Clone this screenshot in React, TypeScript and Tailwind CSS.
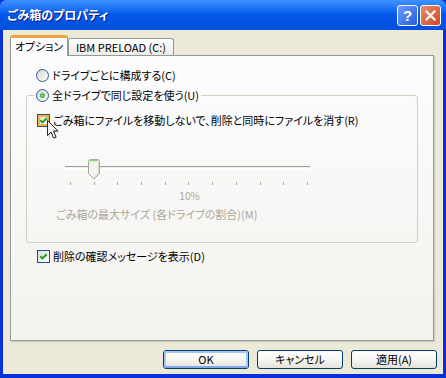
import React from 'react'

function CheckBox({ hover }: { hover?: boolean }) {
  return (
    <span className="relative flex h-[13px] w-[13px] shrink-0 items-center justify-center border border-[#1C5180] bg-linear-to-br from-[#DCDCD7] to-white">
      {hover && <span className="absolute inset-0 border-2 border-[#F8B33A]" />}
      <svg width="9" height="9" viewBox="0 0 9 9" className="relative">
        <path d="M1.3 4.2 L3.5 6.4 L7.7 2.2" stroke="#21A121" strokeWidth="2" fill="none" />
      </svg>
    </span>
  )
}

function Radio({ on }: { on?: boolean }) {
  return (
    <span className="flex h-[13px] w-[13px] shrink-0 items-center justify-center rounded-full border border-[#2A5A8C] bg-linear-to-br from-[#D6D5CE] to-white">
      {on && <span className="h-[5px] w-[5px] rounded-full bg-radial from-[#7BE07B] to-[#1E9A1E]" />}
    </span>
  )
}

function XpButton({ label, def }: { label: string; def?: boolean }) {
  return (
    <button className="relative h-[19px] w-[86px] rounded-[3px] border border-[#003C74] bg-linear-to-b from-white via-[#F6F5F1] to-[#E3E2DA] text-[11px] leading-[17px] text-black">
      {def && <span className="absolute inset-0 rounded-[2px] border-2 border-[#A8C5F2] border-b-[#7FA8EC]" />}
      <span className="relative">{label}</span>
    </button>
  )
}

export default function App() {
  return (
    <div className="flex h-[378px] w-[446px] flex-col bg-[#0831D9] font-['Noto_Sans_CJK_JP','Noto_Sans',sans-serif] [font-feature-settings:'palt']">
      {/* title bar */}
      <div className="flex h-[30px] shrink-0 items-center justify-between rounded-t-[6px] bg-linear-to-b from-[#3D93FF] via-[#0257EA] to-[#0450DB] pl-[7px] pr-[5px]">
        <span className="text-[12px] font-bold text-white [text-shadow:1px_1px_0_#0A1883]">ごみ箱のプロパティ</span>
        <div className="flex gap-[2px]">
          <div className="flex h-[21px] w-[21px] items-center justify-center rounded-[3px] border border-white bg-linear-to-br from-[#6D9DF8] to-[#245BE0] font-['Liberation_Sans',sans-serif] text-[15px] font-bold leading-none text-white">?</div>
          <div className="flex h-[21px] w-[21px] items-center justify-center rounded-[3px] border border-white bg-linear-to-br from-[#E98B6E] to-[#D2461E]">
            <svg width="11" height="11" viewBox="0 0 11 11">
              <path d="M1.5 1.5 L9.5 9.5 M9.5 1.5 L1.5 9.5" stroke="white" strokeWidth="2.2" strokeLinecap="square" />
            </svg>
          </div>
        </div>
      </div>

      {/* body */}
      <div className="mx-[3px] mb-[4px] flex flex-1 flex-col bg-[#ECE9D8] pl-[7px] pt-[5px]">
        {/* tabs */}
        <div className="relative z-10 flex items-end">
          <div className="mb-[-1px] flex h-[21px] w-[58px] items-start justify-center rounded-t-[3px] border-x border-t-[3px] border-x-[#919B9C] border-t-[#F1A33C] bg-[#FCFCFE] pt-[1px] text-[11px] leading-[14px] text-black">
            オプション
          </div>
          <div className="flex h-[17px] w-[106px] items-center justify-center rounded-t-[3px] border-x border-t border-[#919B9C] bg-linear-to-b from-white to-[#ECEBE6] text-[11px] leading-[14px] text-black">
            IBM PRELOAD (C:)
          </div>
        </div>

        {/* panel */}
        <div className="flex h-[286px] w-[424px] flex-col border border-[#919B9C] bg-linear-to-b from-[#FCFCFE] to-[#F3F2ED] shadow-[1px_1px_0_#D0CEBF,2px_2px_0_#E3E0D0] text-[11px] leading-[14px] text-black">
          <div className="mt-[12px] flex h-[14px] items-center gap-[3px] pl-[25px]">
            <Radio />
            <span>ドライブごとに構成する(C)</span>
          </div>

          <fieldset className="mx-[15px] mt-[6px] rounded-[3px] border border-[#D0D0BF] pb-[22px] pl-[7px]">
            <legend className="px-[2px]">
              <span className="flex h-[14px] items-center gap-[3px]">
                <Radio on />
                <span>全ドライブで同じ設定を使う(U)</span>
              </span>
            </legend>
            <div className="relative mt-[11px] flex h-[14px] items-center gap-[3px] pl-[3px]">
              <CheckBox hover />
              <span>ごみ箱にファイルを移動しないで、削除と同時にファイルを消す(R)</span>
              <svg width="13" height="21" viewBox="0 0 13 21" className="absolute left-[12px] top-[6px]">
                <path d="M1.5 1.5 L1.5 16.5 L5 13 L7.5 19 L10 18 L7.5 12 L12 12 Z" fill="#6B6B6B" opacity="0.35" transform="translate(1 1)" />
                <path d="M1.5 1.5 L1.5 16.5 L5 13 L7.5 19 L10 18 L7.5 12 L12 12 Z" fill="#F4F4F4" stroke="#2A2A2A" strokeWidth="1" strokeLinejoin="round" />
              </svg>
            </div>

            {/* slider */}
            <div className="ml-[31px] mt-[32px] w-[245px]">
              <div className="relative h-[20px]">
                <div className="absolute left-0 right-0 top-[7px] h-[3px] border-y border-t-[#9D9D97] border-b-white bg-[#F0EFE9]" />
                <svg width="12" height="21" viewBox="0 0 12 21" className="absolute left-[23px] top-0">
                  <path d="M0.5 2.5 Q0.5 0.5 2.5 0.5 H9.5 Q11.5 0.5 11.5 2.5 V14.5 L6 20 L0.5 14.5 Z" fill="#F3F2EC" stroke="#A7A69D" />
                  <path d="M2 1.6 H10" stroke="#8CD98C" strokeWidth="1.4" />
                  <path d="M10.5 3 V14 L6 18.6" stroke="#D8D6CB" fill="none" />
                </svg>
              </div>
              <div className="ml-[5px] mt-[3px] flex w-[238px] justify-between">
                {[0, 1, 2, 3, 4, 5, 6, 7, 8, 9, 10].map(i => (
                  <span key={i} className="h-[3px] w-px bg-[#ACA899]" />
                ))}
              </div>
              <div className="mt-[5px] h-[12px] pl-[4px] text-center text-[10px] leading-[12px] text-[#ACA899]">10%</div>
            </div>
            <div className="ml-[22px] mt-[6px] h-[12px] leading-[12px] text-[#ACA899]">ごみ箱の最大サイズ (各ドライブの割合)(M)</div>
          </fieldset>

          <div className="ml-[26px] mt-[6px] flex h-[14px] items-center gap-[3px]">
            <CheckBox />
            <span>削除の確認メッセージを表示(D)</span>
          </div>
        </div>

        {/* buttons */}
        <div className="mt-[9px] flex justify-end gap-[8px] pr-[6px]">
          <XpButton label="OK" def />
          <XpButton label="キャンセル" />
          <XpButton label="適用(A)" />
        </div>
      </div>
    </div>
  )
}
